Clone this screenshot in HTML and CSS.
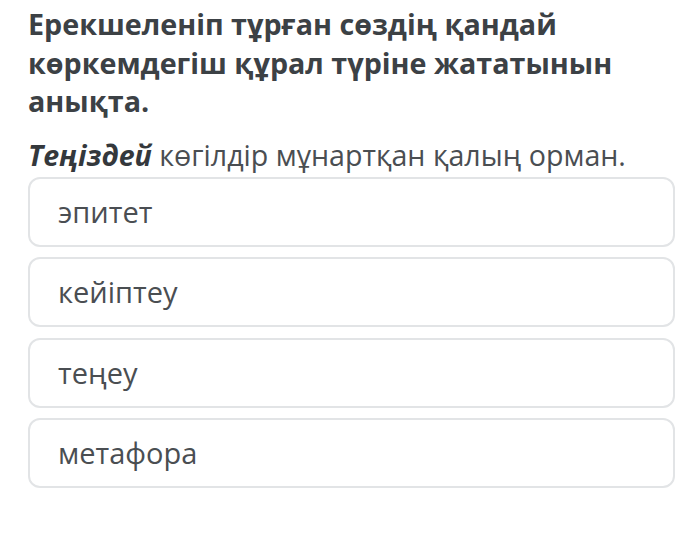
FILE: index.html
```html
<!DOCTYPE html>
<html lang="kk">
<head>
    <meta charset="UTF-8">
    <meta name="viewport" content="width=device-width, initial-scale=1.0">
    <title>Тест</title>
    <link rel="stylesheet" href="styles.css">
</head>
<body>
    <div class="question">
        <h1 class="question-title">Ерекшеленіп тұрған сөздің қандай көркемдегіш құрал түріне жататынын анықта.</h1>

        <p class="question-text"><b>Теңіздей</b> көгілдір мұнартқан қалың орман.</p>

        <ul class="options">
            <li class="option">эпитет</li>
            <li class="option">кейіптеу</li>
            <li class="option">теңеу</li>
            <li class="option">метафора</li>
        </ul>
    </div>
</body>
</html>
```

FILE: styles.css
```css
body {
    font-family: "Open Sans", "Noto Sans", sans-serif;
    background-color: #fff;
    margin: 0;
    padding: 0;
}

.question {
    padding: 5px 14px 0 28px;
}

.question-title {
    margin: 0;
    font-size: 28.7px;
    line-height: 38.5px;
    font-weight: 700;
    color: #3c4145;
}

.question-text {
    margin: 14px 0 0;
    font-size: 28.6px;
    line-height: 40px;
    color: #4a4e52;
}

.question-text b {
    font-style: italic;
    color: #34383c;
}

.options {
    list-style: none;
    margin: 2px 0 0;
    padding: 0;
}

.option {
    height: 66px;
    margin-bottom: 10.5px;
    padding: 0 28px;
    border: 2px solid #e2e4e6;
    border-radius: 12px;
    font-size: 29px;
    line-height: 66px;
    color: #4a4e52;
}
```
